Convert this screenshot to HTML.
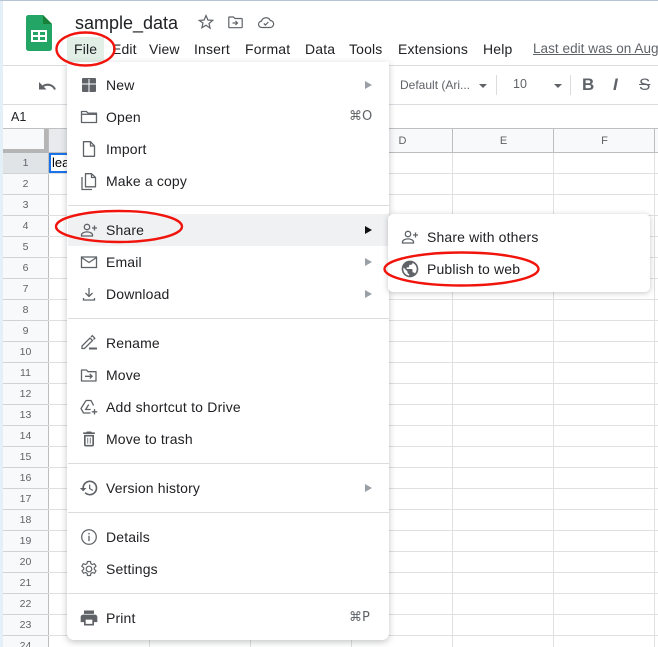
<!DOCTYPE html>
<html><head><meta charset="utf-8">
<style>
html,body{margin:0;padding:0;background:#fff}
#p{position:relative;width:658px;height:647px;overflow:hidden;background:#fff;font-family:"Liberation Sans",sans-serif;color:#202124}
#p div{position:absolute;white-space:nowrap}
svg{position:absolute;overflow:visible}
.m{font-size:14px;top:41px;line-height:16px;letter-spacing:.15px;color:#202124}
.h{background:#dadce0;height:1px}
.rn{left:3px;width:45px;text-align:center;font-size:10.5px;color:#5f6368;line-height:20px;height:20px}
.vl{width:1px;top:153px;height:494px;background:#dfe0e0}
.hl{left:48px;width:610px;height:1px;background:#dfe0e0}
.ch{top:130px;height:23px;line-height:23px;text-align:center;font-size:11px;color:#5f6368}
.t{font-size:14px;left:106px;line-height:18px;color:#202124;letter-spacing:.15px}
.ar{left:365px;width:0;height:0;border-left:7px solid #9aa0a6;border-top:4px solid transparent;border-bottom:4px solid transparent}
.sep{left:68px;width:321px;height:1px;background:#dadce0}
.ic{left:79px;width:20px;height:20px}
</style></head><body><div id="p">
<div style="left:0;top:0;width:3px;height:647px;background:#e3f0f8"></div>
<div style="left:0;top:0;width:658px;height:1px;background:#b4c4d4"></div>

<!-- logo -->
<svg style="left:26px;top:15px" width="26" height="36" viewBox="0 0 26 36"><path d="M2.500 0H17l9 9v24.500a2.500 2.500 0 0 1-2.500 2.500h-21A2.500 2.500 0 0 1 0 33.500V2.500A2.500 2.500 0 0 1 2.500 0z" fill="#23a566"/><path d="M17 0l9 9h-9z" fill="#188038"/><path d="M5 15h16v12H5z" fill="#fff"/><path d="M7 17h5v3H7zM14 17h5v3h-5zM7 22h5v3H7zM14 22h5v3h-5z" fill="#23a566"/></svg>
<div style="left:75px;top:11px;font-size:18px;line-height:24px;color:#202124">sample_data</div>
<svg style="left:198px;top:14px" width="16" height="16" viewBox="0 0 16 16" fill="none" stroke="#5f6368" stroke-width="1.200"><path d="M8 1.500l1.900 4.500 4.800.4-3.700 3.100 1.100 4.700L8 11.200l-4.100 2.500L5 9 1.300 6.400l4.800-.4z"/></svg>
<svg style="left:228px;top:16px" width="15" height="13" viewBox="0 0 15 13" fill="none" stroke="#5f6368" stroke-width="1.200"><path d="M1 1h4.500l1.500 1.500h6.500a.7.700 0 0 1 .7.700V11a.7.700 0 0 1-.7.700H1.500A.7.700 0 0 1 .8 11V1.500z"/><path d="M4.500 7h5M7.500 5l2 2-2 2"/></svg>
<svg style="left:258px;top:16px" width="16" height="13" viewBox="0 0 16 13" fill="none" stroke="#5f6368" stroke-width="1.200"><path d="M4 11.500a3.200 3.200 0 0 1-.5-6.400A4.700 4.700 0 0 1 12.300 4.500a3.500 3.500 0 0 1-.3 7z"/><path d="M5.800 7.500l1.600 1.500 3-3"/></svg>

<div style="left:67px;top:37px;width:37px;height:26px;background:#e2efe6"></div>
<div class="m" style="left:74px">File</div>
<div class="m" style="left:112px">Edit</div>
<div class="m" style="left:149px">View</div>
<div class="m" style="left:194px">Insert</div>
<div class="m" style="left:245px">Format</div>
<div class="m" style="left:305px">Data</div>
<div class="m" style="left:349px">Tools</div>
<div class="m" style="left:398px">Extensions</div>
<div class="m" style="left:483px">Help</div>
<div class="m" style="left:533px;color:#5f6368;text-decoration:underline;font-size:13.500px;letter-spacing:.05px">Last edit was on Aug</div>

<div class="h" style="left:3px;top:65px;width:655px"></div>
<svg style="left:39px;top:80px" width="17" height="11" viewBox="0 0 17 11"><path d="M16 9.500C14 5 9 3.300 4 6" fill="none" stroke="#5f6368" stroke-width="2"/><path d="M0 2v7.500h7.500z" fill="#5f6368"/></svg>
<div style="left:400px;top:77px;font-size:12px;line-height:16px;color:#5f6368">Default (Ari...</div>
<div style="left:479px;top:84px;border-top:4px solid #5f6368;border-left:4px solid transparent;border-right:4px solid transparent"></div>
<div style="left:496px;top:75px;width:1px;height:20px;background:#dadce0"></div>
<div style="left:513px;top:76px;font-size:12.500px;line-height:16px;color:#5f6368">10</div>
<div style="left:554px;top:84px;border-top:4px solid #5f6368;border-left:4px solid transparent;border-right:4px solid transparent"></div>
<div style="left:570px;top:75px;width:1px;height:20px;background:#dadce0"></div>
<div style="left:582px;top:75px;font-size:17px;font-weight:bold;line-height:20px;color:#5f6368">B</div>
<div style="left:613px;top:75px;font-size:17px;font-style:italic;font-weight:bold;line-height:20px;color:#5f6368">I</div>
<div style="left:639px;top:75px;font-size:17px;text-decoration:line-through;line-height:20px;color:#5f6368">S</div>

<div class="h" style="left:3px;top:104px;width:655px"></div>
<div style="left:11px;top:109px;font-size:12.500px;line-height:16px;color:#202124">A1</div>
<div class="h" style="left:3px;top:128px;width:655px;background:#c0c0c0"></div>

<!-- grid headers -->
<div style="left:3px;top:129px;width:655px;height:23px;background:#f8f9fa"></div>
<div style="left:3px;top:129px;width:45px;height:24px;background:#f8f9fa;border-right:4px solid #b5b5b5;border-bottom:4px solid #b5b5b5;box-sizing:border-box"></div>
<div style="left:48px;top:152px;width:610px;height:1px;background:#bdbdbd"></div>
<div style="left:48px;top:129px;width:102px;height:23px;background:#e8eaed"></div>
<div style="left:452px;top:129px;width:1px;height:24px;background:#bdbdbd"></div>
<div style="left:553px;top:129px;width:1px;height:24px;background:#bdbdbd"></div>
<div style="left:654px;top:129px;width:1px;height:24px;background:#bdbdbd"></div>
<div class="ch" style="left:352px;width:101px">D</div>
<div class="ch" style="left:453px;width:101px">E</div>
<div class="ch" style="left:554px;width:101px">F</div>

<!-- row headers -->
<div style="left:3px;top:153px;width:45px;height:494px;background:#f8f9fa"></div>
<div style="left:3px;top:153px;width:45px;height:20px;background:#e1e4e7"></div>
<div style="left:48px;top:129px;width:1px;height:518px;background:#bdbdbd"></div>

<div class="vl" style="left:149px"></div><div class="vl" style="left:250px"></div><div class="vl" style="left:351px"></div><div class="vl" style="left:452px"></div><div class="vl" style="left:553px"></div><div class="vl" style="left:654px"></div>

<div class="rn" style="top:153px">1</div><div class="rn" style="top:174px">2</div><div class="rn" style="top:195px">3</div><div class="rn" style="top:216px">4</div><div class="rn" style="top:237px">5</div><div class="rn" style="top:258px">6</div><div class="rn" style="top:279px">7</div><div class="rn" style="top:300px">8</div><div class="rn" style="top:321px">9</div><div class="rn" style="top:342px">10</div><div class="rn" style="top:363px">11</div><div class="rn" style="top:384px">12</div><div class="rn" style="top:405px">13</div><div class="rn" style="top:426px">14</div><div class="rn" style="top:447px">15</div><div class="rn" style="top:468px">16</div><div class="rn" style="top:489px">17</div><div class="rn" style="top:510px">18</div><div class="rn" style="top:531px">19</div><div class="rn" style="top:552px">20</div><div class="rn" style="top:573px">21</div><div class="rn" style="top:594px">22</div><div class="rn" style="top:615px">23</div><div class="rn" style="top:636px">24</div>

<div class="hl" style="top:173px"></div><div class="hl" style="top:194px"></div><div class="hl" style="top:215px"></div><div class="hl" style="top:236px"></div><div class="hl" style="top:257px"></div><div class="hl" style="top:278px"></div><div class="hl" style="top:299px"></div><div class="hl" style="top:320px"></div><div class="hl" style="top:341px"></div><div class="hl" style="top:362px"></div><div class="hl" style="top:383px"></div><div class="hl" style="top:404px"></div><div class="hl" style="top:425px"></div><div class="hl" style="top:446px"></div><div class="hl" style="top:467px"></div><div class="hl" style="top:488px"></div><div class="hl" style="top:509px"></div><div class="hl" style="top:530px"></div><div class="hl" style="top:551px"></div><div class="hl" style="top:572px"></div><div class="hl" style="top:593px"></div><div class="hl" style="top:614px"></div><div class="hl" style="top:635px"></div>
<div style="left:3px;top:173px;width:45px;height:463px;background:repeating-linear-gradient(to bottom,#d0d2d4 0,#d0d2d4 1px,transparent 1px,transparent 21px)"></div>

<div style="left:49px;top:153px;width:30px;height:20px;border:2px solid #1a73e8;box-sizing:border-box"></div>
<div style="left:52px;top:155px;font-size:13px;line-height:16px;color:#000">lea</div>

<!-- menu -->
<div style="left:67px;top:62px;width:322px;height:578px;background:#fff;border-radius:0 0 7px 7px;box-shadow:0 2px 7px rgba(60,64,67,.3)"></div>
<div style="left:68px;top:214px;width:321px;height:32px;background:#f0f1f3"></div>

<svg class="ic" style="top:75px" viewBox="0 0 20 20"><rect x="3" y="3" width="14" height="14" rx="1" fill="#5f6368"/><path d="M10 4v13M3 9h14" stroke="#fff" stroke-width="1"/></svg>
<div class="t" style="top:76px">New</div><div class="ar" style="top:81px"></div>

<svg class="ic" style="top:107px" viewBox="0 0 20 20" fill="none" stroke="#5f6368" stroke-width="1.300"><path d="M2.500 4.500h5l1.500 1.700h8.500v9.300h-15z" stroke-linejoin="round"/><path d="M2.500 7.300h15"/></svg>
<div class="t" style="top:108px">Open</div>
<div style="left:349px;top:109px;font-size:13px;line-height:16px;color:#5f6368;font-family:'DejaVu Sans',sans-serif">⌘O</div>

<svg class="ic" style="top:139px" viewBox="0 0 20 20" fill="none" stroke="#5f6368" stroke-width="1.300"><path d="M4.500 2.700h7L15.500 7v10.300h-11z" stroke-linejoin="round"/><path d="M11.500 2.700V7h4"/></svg>
<div class="t" style="top:140px">Import</div>

<svg class="ic" style="top:171px" viewBox="0 0 20 20" fill="none" stroke="#5f6368" stroke-width="1.300"><path d="M6.500 2.700h6l4 3.800v9.300h-10z" stroke-linejoin="round"/><path d="M12.500 2.700v3.800h4"/><path d="M3 6v12.500h10"/></svg>
<div class="t" style="top:172px">Make a copy</div>

<div class="sep" style="top:205px"></div>

<svg class="ic" style="top:220px" viewBox="0 0 20 20" fill="none" stroke="#5f6368" stroke-width="1.300"><circle cx="8" cy="7" r="2.700"/><path d="M2.500 16v-1.200c0-1.800 3.200-2.900 5.500-2.900s5.500 1.100 5.500 2.900V16z"/><path d="M15.500 5.500v5M13 8h5"/></svg>
<div class="t" style="top:221px">Share</div>
<div class="ar" style="top:226px;border-left-color:#111"></div>

<svg class="ic" style="top:252px" viewBox="0 0 20 20" fill="none" stroke="#5f6368" stroke-width="1.300"><rect x="2.500" y="5" width="15" height="10.500"/><path d="M2.500 5.500l7.500 5 7.500-5"/></svg>
<div class="t" style="top:253px">Email</div><div class="ar" style="top:258px"></div>

<svg class="ic" style="top:284px" viewBox="0 0 20 20" fill="none" stroke="#5f6368" stroke-width="1.300"><path d="M10 4v8.500M6.500 9l3.500 3.500L13.500 9"/><path d="M4.500 14v2h11v-2"/></svg>
<div class="t" style="top:285px">Download</div><div class="ar" style="top:290px"></div>

<div class="sep" style="top:318px"></div>

<svg class="ic" style="top:333px" viewBox="0 0 20 20" fill="none" stroke="#5f6368" stroke-width="1.300"><path d="M3 15.500v-2.500l8-8 2.500 2.500-8 8z"/><path d="M12 4l1.300-1.300 2.500 2.500L14.500 6.500"/><path d="M10 15.500h8" stroke-width="2"/></svg>
<div class="t" style="top:334px">Rename</div>

<svg class="ic" style="top:365px" viewBox="0 0 20 20" fill="none" stroke="#5f6368" stroke-width="1.300"><path d="M2.500 5h5l1.500 1.700h8v9.300h-14.500z" stroke-linejoin="round"/><path d="M6 11.300h7M10.800 9l2.300 2.300-2.300 2.300"/></svg>
<div class="t" style="top:366px">Move</div>

<svg class="ic" style="top:397px" viewBox="0 0 20 20" fill="none" stroke="#5f6368" stroke-width="1.300"><path d="M7 3.500h5l2.600 5M7 3.500L2 11.500 4.500 16h7"/><path d="M9.700 7.500l-3 5h5"/><path d="M15.500 12v5.500M12.800 14.800h5.400"/></svg>
<div class="t" style="top:398px;letter-spacing:.2px">Add shortcut to Drive</div>

<svg class="ic" style="top:429px" viewBox="0 0 24 24" fill="#5f6368"><path d="M6 19c0 1.100.900 2 2 2h8c1.100 0 2-.900 2-2V7H6v12zM8 9h8v10H8V9zm7.500-5l-1-1h-5l-1 1H5v2h14V4z"/><path d="M10 10.500h1v7h-1zM13 10.500h1v7h-1z"/></svg>
<div class="t" style="top:430px">Move to trash</div>

<div class="sep" style="top:463px"></div>

<svg class="ic" style="top:478px" viewBox="0 0 24 24" fill="#5f6368"><path d="M13 3c-4.970 0-9 4.030-9 9H1l3.890 3.890.070.140L9 12H6c0-3.870 3.130-7 7-7s7 3.130 7 7-3.130 7-7 7c-1.930 0-3.680-.790-4.940-2.060l-1.420 1.420C8.270 19.990 10.510 21 13 21c4.970 0 9-4.030 9-9s-4.030-9-9-9zm-1 5v5l4.280 2.540.720-1.210-3.500-2.080V8H12z"/></svg>
<div class="t" style="top:479px">Version history</div><div class="ar" style="top:484px"></div>

<div class="sep" style="top:512px"></div>

<svg class="ic" style="top:527px" viewBox="0 0 24 24" fill="#5f6368"><path d="M11.200 7h1.600v1.800h-1.600zm0 3.500h1.600v6.500h-1.600zM12 2.500a9.500 9.500 0 1 0 0 19 9.500 9.500 0 0 0 0-19zm0 17.500a8 8 0 1 1 0-16 8 8 0 0 1 0 16z"/></svg>
<div class="t" style="top:528px">Details</div>

<svg class="ic" style="top:559px" viewBox="0 0 20 20" fill="none" stroke="#5f6368" stroke-width="1.200"><circle cx="10" cy="10" r="2.800"/><path d="M8.500 2.500h3l.4 2.200 1.500.8 2.100-.8 1.500 2.600-1.700 1.400v1.600l1.700 1.400-1.500 2.600-2.100-.8-1.500.8-.4 2.200h-3l-.4-2.200-1.500-.8-2.100.8-1.500-2.600 1.700-1.400V8.700L2.800 7.300l1.500-2.600 2.100.8 1.500-.8z" stroke-linejoin="round"/></svg>
<div class="t" style="top:560px">Settings</div>

<div class="sep" style="top:593px"></div>

<svg class="ic" style="top:608px" viewBox="0 0 24 24" fill="#5f6368"><path d="M19 8H5c-1.660 0-3 1.340-3 3v6h4v4h12v-4h4v-6c0-1.660-1.340-3-3-3zm-3 11H8v-5h8v5zm2-16H6v4h12V3z"/></svg>
<div class="t" style="top:609px">Print</div>
<div style="left:349px;top:610px;font-size:13px;line-height:16px;color:#5f6368;font-family:'DejaVu Sans',sans-serif">⌘P</div>

<!-- submenu -->
<div style="left:388px;top:214px;width:262px;height:78px;background:#fff;border-radius:5px;box-shadow:0 1px 6px rgba(60,64,67,.3)"></div>
<svg style="left:400px;top:227px" width="20" height="20" viewBox="0 0 20 20" fill="none" stroke="#5f6368" stroke-width="1.300"><circle cx="8" cy="7" r="2.700"/><path d="M2.500 16v-1.200c0-1.800 3.200-2.900 5.500-2.900s5.500 1.100 5.500 2.900V16z"/><path d="M15.500 5.500v5M13 8h5"/></svg>
<div class="t" style="left:427px;top:228px">Share with others</div>
<svg style="left:400px;top:259px" width="20" height="20" viewBox="0 0 24 24" fill="#5f6368"><path d="M12 2C6.480 2 2 6.480 2 12s4.480 10 10 10 10-4.480 10-10S17.520 2 12 2zm-1 17.930c-3.950-.490-7-3.850-7-7.930 0-.620.080-1.210.210-1.790L9 15v1c0 1.100.900 2 2 2v1.930zm6.900-2.540c-.260-.810-1-1.390-1.900-1.390h-1v-3c0-.550-.450-1-1-1H8v-2h2c.550 0 1-.450 1-1V7h2c1.100 0 2-.900 2-2v-.410c2.930 1.190 5 4.060 5 7.410 0 2.080-.800 3.970-2.100 5.390z"/></svg>
<div class="t" style="left:427px;top:260px">Publish to web</div>

<!-- red ellipses -->
<svg style="left:0;top:0" width="658" height="647" fill="none" stroke="#f0140c" stroke-width="2.400">
<ellipse cx="85.500" cy="49" rx="29" ry="16.500"/>
<ellipse cx="119" cy="226.500" rx="63" ry="15.500"/>
<ellipse cx="461.500" cy="269" rx="77" ry="16.500"/>
</svg>
</div></body></html>
